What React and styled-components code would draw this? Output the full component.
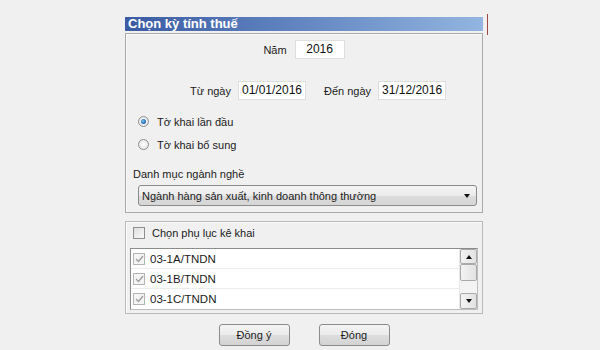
import React from "react";
import styled, { createGlobalStyle } from "styled-components";

const GlobalStyle = createGlobalStyle`
  html, body {
    margin: 0;
    background: #f0f0f0;
  }
  body {
    font-family: "Liberation Sans", Arial, sans-serif;
    font-size: 11px;
    color: #1b1b1b;
  }
`;

const Page = styled.div`
  width: 600px;
  height: 350px;
  box-sizing: border-box;
  padding: 17px 0 0 125px;
  display: flex;
  background: #f0f0f0;
`;

const Column = styled.div`
  width: 358px;
  display: flex;
  flex-direction: column;
`;

const Marker = styled.div`
  align-self: flex-start;
  width: 1px;
  height: 21px;
  margin: -3px 0 0 4px;
  background: #a04848;
`;

const TitleBar = styled.div`
  height: 14px;
  line-height: 14px;
  padding-left: 3px;
  font-size: 13px;
  font-weight: bold;
  color: #fff;
  background: linear-gradient(90deg, #3a5ba3 0%, #5f82bf 45%, #93b5e0 100%);
  white-space: nowrap;
`;

const Panel = styled.div`
  box-sizing: border-box;
  height: ${(p) => p.$h}px;
  margin-top: ${(p) => p.$top}px;
  border: 1px solid ${(p) => p.$line || "#a9a9a9"};
  box-shadow: inset 1px 1px 0 #fbfbfb;
  display: flex;
  flex-direction: column;
`;

const YearRow = styled.div`
  display: flex;
  justify-content: center;
  align-items: center;
  gap: 8px;
  margin-top: 6px;
  height: 19px;
`;

const DateRow = styled.div`
  display: flex;
  align-items: center;
  margin-top: 22px;
  padding-left: 64px;
  height: 19px;
`;

const FieldLabel = styled.span`
  margin-left: ${(p) => p.$gap || 0}px;
  margin-right: 7px;
  white-space: nowrap;
`;

const TextBox = styled.div`
  box-sizing: border-box;
  width: ${(p) => p.$w}px;
  height: 19px;
  line-height: 17px;
  background: #fff;
  border: 1px solid #dedede;
  font-size: 12px;
  color: #111;
  text-align: center;
`;

const RadioGroup = styled.div`
  margin-top: 10px;
  padding-left: 12px;
  display: flex;
  flex-direction: column;
`;

const RadioRow = styled.label`
  height: 23px;
  display: flex;
  align-items: center;
  gap: 8px;
`;

const RadioDot = styled.span`
  box-sizing: border-box;
  width: 11px;
  height: 11px;
  border-radius: 50%;
  border: 1px solid #8e8f8f;
  background: radial-gradient(circle at 50% 50%, #ffffff 0%, #dedede 100%);
  display: flex;
  align-items: center;
  justify-content: center;
  &::after {
    content: "";
    width: 5px;
    height: 5px;
    border-radius: 50%;
    background: ${(p) =>
      p.$on ? "radial-gradient(circle at 40% 40%, #7cc4f4 0%, #1b5fa6 70%, #0d3f78 100%)" : "transparent"};
  }
`;

const SectionLabel = styled.div`
  margin-top: 11px;
  padding-left: 7px;
  height: 14px;
  line-height: 14px;
`;

const Combo = styled.div`
  box-sizing: border-box;
  margin: 4px 0 0 12px;
  width: 339px;
  height: 21px;
  border: 1px solid #8a8a8a;
  border-radius: 3px;
  background: linear-gradient(#f5f5f5 0%, #ebebeb 50%, #dcdcdc 51%, #d6d6d6 100%);
  display: flex;
  align-items: center;
  justify-content: space-between;
  padding: 0 6px 0 3px;
`;

const Caret = styled.span`
  width: 0;
  height: 0;
  border-left: 3px solid transparent;
  border-right: 3px solid transparent;
  border-${(p) => (p.$up ? "bottom" : "top")}: 4px solid #111;
`;

const CheckRow = styled.label`
  display: flex;
  align-items: center;
  gap: 7px;
  margin-top: 5px;
  padding-left: 7px;
  height: 12px;
`;

const Box = styled.span`
  box-sizing: border-box;
  width: 12px;
  height: 12px;
  flex: none;
  border: 1px solid ${(p) => (p.$off ? "#b4b4b4" : "#8e8f8f")};
  background: ${(p) => (p.$off ? "#f4f4f4" : "linear-gradient(135deg, #dcdcdc, #fbfbfb)")};
  display: flex;
  align-items: center;
  justify-content: center;
`;

const ListBox = styled.div`
  box-sizing: border-box;
  margin: 9px 0 0 4px;
  width: 348px;
  height: 62px;
  border: 1px solid #8c8c8c;
  border-right-color: #bdbdbd;
  border-bottom-color: #bdbdbd;
  background: #fff;
  display: flex;
`;

const Rows = styled.div`
  flex: 1;
  display: flex;
  flex-direction: column;
`;

const ListRow = styled.div`
  box-sizing: border-box;
  height: 20px;
  padding-left: 2px;
  display: flex;
  align-items: center;
  gap: 5px;
  border-bottom: 1px solid ${(p) => (p.$last ? "transparent" : "#ececec")};
  font-size: 11.5px;
`;

const ScrollBar = styled.div`
  width: 17px;
  display: flex;
  flex-direction: column;
  background: #f3f3f3;
  border-left: 1px solid #e8e8e8;
`;

const ScrollButton = styled.div`
  box-sizing: border-box;
  height: ${(p) => p.$h}px;
  border: 1px solid #a9a9a9;
  border-radius: 2px;
  background: linear-gradient(90deg, #f3f3f3, #e2e2e2);
  display: flex;
  align-items: center;
  justify-content: center;
`;

const Track = styled.div`
  flex: 1;
`;

const ButtonRow = styled.div`
  margin-top: 10px;
  display: flex;
  justify-content: center;
  gap: 29px;
`;

const Button = styled.button`
  box-sizing: border-box;
  width: 71px;
  height: 22px;
  padding: 0;
  border: 1px solid #8b8b8b;
  border-radius: 3px;
  background: linear-gradient(#f4f4f4 0%, #ebebeb 50%, #dddddd 51%, #d3d3d3 100%);
  font-family: inherit;
  font-size: 11px;
  color: #1b1b1b;
  u {
    text-underline-offset: 1px;
  }
`;

const Tick = () => (
  <svg width="9" height="8" viewBox="0 0 9 8">
    <path d="M1 4 L3.5 6.5 L8 1" fill="none" stroke="#9c9c9c" strokeWidth="1.3" />
  </svg>
);

const forms = ["03-1A/TNDN", "03-1B/TNDN", "03-1C/TNDN"];

export default function App() {
  return (
    <>
      <GlobalStyle />
      <Page>
        <Column>
          <TitleBar>Chọn kỳ tính thuế</TitleBar>
          <Panel $h={180} $top={2}>
            <YearRow>
              <span>Năm</span>
              <TextBox $w={50}>2016</TextBox>
            </YearRow>
            <DateRow>
              <FieldLabel>Từ ngày</FieldLabel>
              <TextBox $w={68}>01/01/2016</TextBox>
              <FieldLabel $gap={18}>Đến ngày</FieldLabel>
              <TextBox $w={68}>31/12/2016</TextBox>
            </DateRow>
            <RadioGroup>
              <RadioRow>
                <RadioDot $on />
                Tờ khai lần đầu
              </RadioRow>
              <RadioRow>
                <RadioDot />
                Tờ khai bổ sung
              </RadioRow>
            </RadioGroup>
            <SectionLabel>Danh mục ngành nghề</SectionLabel>
            <Combo>
              <span>Ngành hàng sản xuất, kinh doanh thông thường</span>
              <Caret />
            </Combo>
          </Panel>
          <Panel $h={93} $top={8} $line="#b9b9b9">
            <CheckRow>
              <Box />
              Chọn phụ lục kê khai
            </CheckRow>
            <ListBox>
              <Rows>
                {forms.map((f, i) => (
                  <ListRow key={f} $last={i === forms.length - 1}>
                    <Box $off>
                      <Tick />
                    </Box>
                    {f}
                  </ListRow>
                ))}
              </Rows>
              <ScrollBar>
                <ScrollButton $h={15}>
                  <Caret $up />
                </ScrollButton>
                <ScrollButton $h={17} />
                <Track />
                <ScrollButton $h={16}>
                  <Caret />
                </ScrollButton>
              </ScrollBar>
            </ListBox>
          </Panel>
          <ButtonRow>
            <Button>
              Đồn<u>g</u> ý
            </Button>
            <Button>
              Đón<u>g</u>
            </Button>
          </ButtonRow>
        </Column>
        <Marker />
      </Page>
    </>
  );
}
